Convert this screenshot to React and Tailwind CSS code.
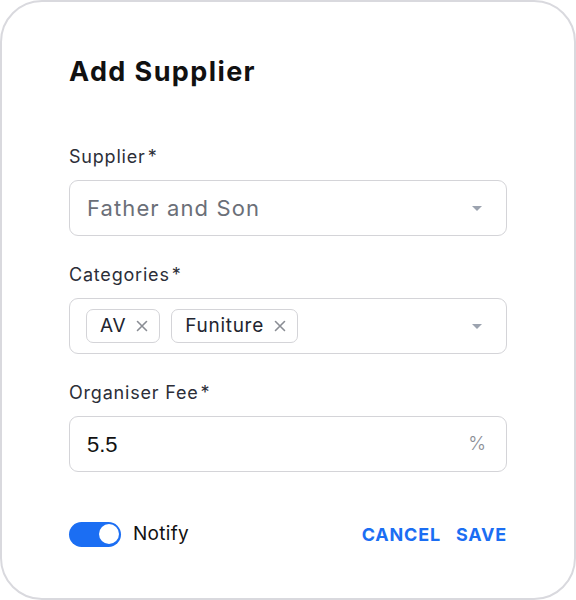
import React, { useState } from 'react';

const font = { fontFamily: 'Inter, "Noto Sans", sans-serif' };

const Caret = () => (
  <svg width="10" height="5" viewBox="0 0 10 5" className="shrink-0">
    <path d="M0 0h10L5 5z" fill="#9ca3af" />
  </svg>
);

const Chip = ({ label }) => (
  <span className="flex items-center gap-[10px] h-[34px] pl-[13px] pr-[11px] border-[1.5px] border-[#d4d4d8] rounded-[7px] text-[19px] tracking-[0.7px] text-[#222530]">
    {label}
    <svg width="12" height="12" viewBox="0 0 12 12">
      <path d="M1.5 1.5l9 9M10.5 1.5l-9 9" stroke="#8a8d94" strokeWidth="1.6" strokeLinecap="round" />
    </svg>
  </span>
);

const Label = ({ children }) => (
  <label className="block text-[18px] leading-[24px] tracking-[0.8px] text-[#2c2e38]">
    {children}
    <span className="ml-[2px]">*</span>
  </label>
);

export default function App() {
  const [notify, setNotify] = useState(true);

  return (
    <div className="w-[576px] h-[600px] bg-white" style={font}>
      <div className="w-full h-full border-2 border-[#d9d9de] rounded-[42px] pt-[54px] px-[67px] flex flex-col">
        {/* Header */}
        <h2 className="text-[27px] leading-[32px] font-bold text-[#111] tracking-[1.4px]">Add Supplier</h2>

        {/* Supplier */}
        <div className="mt-[57px]">
          <Label>Supplier</Label>
          <div className="mt-[11px] h-[56px] border-[1.5px] border-[#d4d4d8] rounded-[9px] flex items-center justify-between pl-[17px] pr-[24px]">
            <span className="text-[22px] tracking-[1.1px] text-[#6b6f78]">Father and Son</span>
            <Caret />
          </div>
        </div>

        {/* Categories */}
        <div className="mt-[27px]">
          <Label>Categories</Label>
          <div className="mt-[11px] h-[56px] border-[1.5px] border-[#d4d4d8] rounded-[9px] flex items-center justify-between pl-[16px] pr-[24px]">
            <div className="flex items-center gap-[11px]">
              <Chip label="AV" />
              <Chip label="Funiture" />
            </div>
            <Caret />
          </div>
        </div>

        {/* Organiser Fee */}
        <div className="mt-[27px]">
          <Label>Organiser Fee</Label>
          <div className="mt-[11px] h-[56px] border-[1.5px] border-[#d4d4d8] rounded-[9px] flex items-center justify-between pl-[17px] pr-[20px]">
            <span className="text-[22px] text-[#111]" style={{ fontFamily: '"Liberation Sans", Arial, sans-serif' }}>5.5</span>
            <span className="text-[19px] font-light text-[#8a8d94]">%</span>
          </div>
        </div>

        {/* Footer */}
        <div className="mt-[48px] flex items-center justify-between">
          <div className="flex items-center gap-[12px]">
            <button
              onClick={() => setNotify(!notify)}
              className={`w-[52px] h-[25px] rounded-full p-[2.5px] flex ${notify ? 'bg-[#1b6ef3] justify-end' : 'bg-[#c4c6cc] justify-start'}`}
            >
              <span className="w-[20px] h-[20px] rounded-full bg-white" />
            </button>
            <span className="text-[19px] tracking-[0.3px] text-[#111]">Notify</span>
          </div>
          <div className="flex items-center gap-[15px] text-[18px] font-bold text-[#1b6ef3] tracking-[0.8px]">
            <button>CANCEL</button>
            <button>SAVE</button>
          </div>
        </div>
      </div>
    </div>
  );
}
